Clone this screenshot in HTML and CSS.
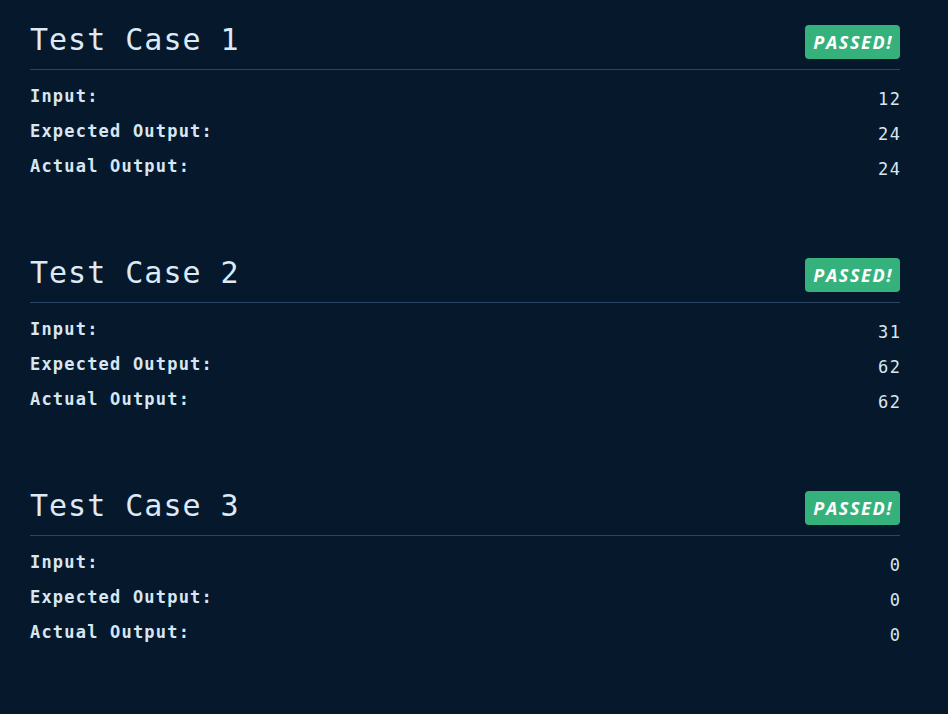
FILE: index.html
```html
<!DOCTYPE html>
<html>
<head>
<meta charset="utf-8">
<link rel="stylesheet" href="styles.css">
</head>
<body>
<main class="page">
  <section class="case">
    <div class="case-head">
      <h2 class="case-title">Test Case 1</h2>
      <span class="badge">PASSED!</span>
    </div>
    <div class="row"><span class="label">Input:</span><span class="value">12</span></div>
    <div class="row"><span class="label">Expected Output:</span><span class="value">24</span></div>
    <div class="row"><span class="label">Actual Output:</span><span class="value">24</span></div>
  </section>
  <section class="case">
    <div class="case-head">
      <h2 class="case-title">Test Case 2</h2>
      <span class="badge">PASSED!</span>
    </div>
    <div class="row"><span class="label">Input:</span><span class="value">31</span></div>
    <div class="row"><span class="label">Expected Output:</span><span class="value">62</span></div>
    <div class="row"><span class="label">Actual Output:</span><span class="value">62</span></div>
  </section>
  <section class="case">
    <div class="case-head">
      <h2 class="case-title">Test Case 3</h2>
      <span class="badge">PASSED!</span>
    </div>
    <div class="row"><span class="label">Input:</span><span class="value">0</span></div>
    <div class="row"><span class="label">Expected Output:</span><span class="value">0</span></div>
    <div class="row"><span class="label">Actual Output:</span><span class="value">0</span></div>
  </section>
</main>
</body>
</html>
```

FILE: styles.css
```css
html, body {
  margin: 0;
  padding: 0;
  background: #05182c;
  height: 100%;
}
body {
  color: #d8e6f2;
  font-family: "DejaVu Sans Mono", monospace;
}
.page {
  padding: 20px 48px 0 30px;
  display: flex;
  flex-direction: column;
}
.case {
  height: 233px;
  display: flex;
  flex-direction: column;
}
.case-head {
  display: flex;
  justify-content: space-between;
  align-items: center;
  border-bottom: 1px solid #2c4560;
  padding: 5px 0 10px;
  height: 34px;
}
.case-title {
  margin: 0;
  padding-bottom: 4px;
  font-weight: normal;
  font-size: 30px;
  letter-spacing: 1px;
  line-height: 32px;
  color: #dde9f4;
}
.badge {
  background: #35b27c;
  color: #ffffff;
  font-family: "Open Sans", sans-serif;
  font-weight: 700;
  font-style: italic;
  font-size: 18px;
  letter-spacing: 1.6px;
  height: 34px;
  line-height: 34px;
  padding: 0 7px 0 8px;
  border-radius: 4px;
  box-sizing: border-box;
}
.row {
  display: flex;
  justify-content: space-between;
  align-items: flex-start;
  height: 35px;
}
.label {
  font-weight: bold;
  font-size: 17px;
  letter-spacing: 1.2px;
  line-height: 20px;
  margin-top: 16px;
}
.value {
  font-size: 17px;
  letter-spacing: 1.5px;
  line-height: 20px;
  margin-top: 19px;
  margin-right: -1.5px;
}
```
